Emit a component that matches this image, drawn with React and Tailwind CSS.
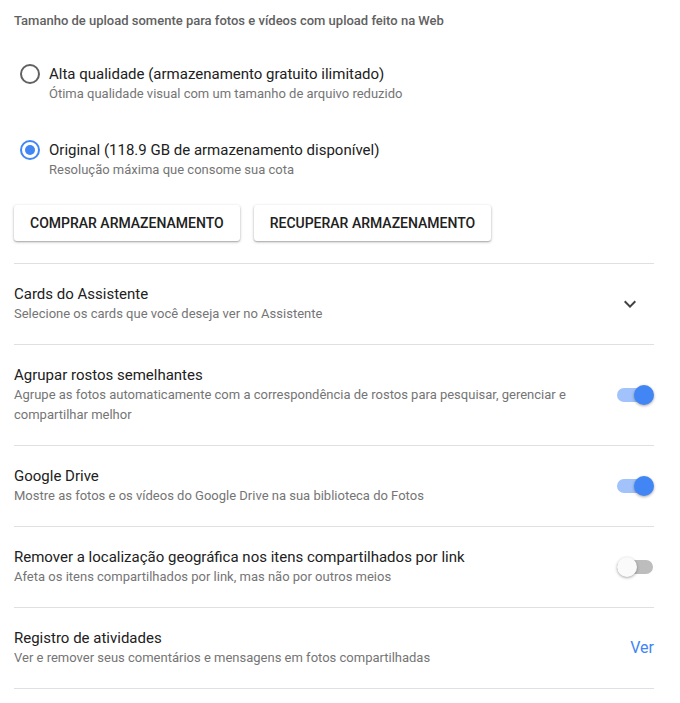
import React from "react";

function Radio({ checked }) {
  return (
    <div
      className={
        "w-5 h-5 rounded-full border-2 flex items-center justify-center shrink-0 " +
        (checked ? "border-[#4285f4]" : "border-[#616161]")
      }
    >
      {checked && <div className="w-[10px] h-[10px] rounded-full bg-[#4285f4]" />}
    </div>
  );
}

function Toggle({ on }) {
  return (
    <div className="relative w-[37px] h-5 flex items-center shrink-0">
      <div
        className={
          "w-[36px] h-[14px] rounded-full " + (on ? "bg-[#a1c2fa]" : "bg-[#bdbdbd]")
        }
      />
      <div
        className={
          "absolute top-0 w-5 h-5 rounded-full shadow-[0_1px_3px_rgba(0,0,0,0.35)] " +
          (on ? "right-0 bg-[#4285f4]" : "left-0 bg-[#fafafa]")
        }
      />
    </div>
  );
}

function Row({ title, sub, right }) {
  return (
    <div className="flex items-center border-b border-[#e0e0e0] py-5">
      <div className="flex-1 pr-[40px]">
        <div className="text-[15px] leading-5 text-[#212121]">{title}</div>
        <div className="text-[13px] leading-5 text-[#757575]">{sub}</div>
      </div>
      {right}
    </div>
  );
}

export default function App() {
  return (
    <div
      className="w-[680px] bg-white px-[14px] pr-[26px]"
      style={{ fontFamily: "Roboto, 'Liberation Sans', sans-serif" }}
    >
      <div className="pt-[11px] text-[13px] leading-5 font-medium text-[#616161]">
        Tamanho de upload somente para fotos e vídeos com upload feito na Web
      </div>

      <div className="mt-[33px] flex items-start pl-[6px]">
        <Radio checked={false} />
        <div className="ml-[9px]">
          <div className="text-[15px] leading-5 text-[#212121]">
            Alta qualidade (armazenamento gratuito ilimitado)
          </div>
          <div className="text-[13px] leading-5 text-[#757575]">
            Ótima qualidade visual com um tamanho de arquivo reduzido
          </div>
        </div>
      </div>

      <div className="mt-[36px] flex items-start pl-[6px]">
        <Radio checked={true} />
        <div className="ml-[9px]">
          <div className="text-[15px] leading-5 text-[#212121]">
            Original (118.9 GB de armazenamento disponível)
          </div>
          <div className="text-[13px] leading-5 text-[#757575]">
            Resolução máxima que consome sua cota
          </div>
        </div>
      </div>

      <div className="mt-[25px] flex gap-[14px]">
        <button className="h-9 px-[16px] rounded-[3px] bg-white text-[14px] font-medium text-[#212121] shadow-[0_1px_3px_rgba(0,0,0,0.3),0_1px_1px_rgba(0,0,0,0.12)]">
          COMPRAR ARMAZENAMENTO
        </button>
        <button className="h-9 px-[16px] rounded-[3px] bg-white text-[14px] font-medium text-[#212121] shadow-[0_1px_3px_rgba(0,0,0,0.3),0_1px_1px_rgba(0,0,0,0.12)]">
          RECUPERAR ARMAZENAMENTO
        </button>
      </div>

      <div className="mt-[22px] border-t border-[#e0e0e0]">
        <Row
          title="Cards do Assistente"
          sub="Selecione os cards que você deseja ver no Assistente"
          right={
            <div className="w-[37px] flex justify-start pl-[7px]">
              <svg width="12" height="8" viewBox="0 0 12 8">
                <path d="M1.4 0.6 L6 5.2 L10.6 0.6 L12 2 L6 8 L0 2 Z" fill="#424242" />
              </svg>
            </div>
          }
        />
        <Row
          title="Agrupar rostos semelhantes"
          sub="Agrupe as fotos automaticamente com a correspondência de rostos para pesquisar, gerenciar e compartilhar melhor"
          right={<Toggle on={true} />}
        />
        <Row
          title="Google Drive"
          sub="Mostre as fotos e os vídeos do Google Drive na sua biblioteca do Fotos"
          right={<Toggle on={true} />}
        />
        <Row
          title="Remover a localização geográfica nos itens compartilhados por link"
          sub="Afeta os itens compartilhados por link, mas não por outros meios"
          right={<Toggle on={false} />}
        />
        <Row
          title="Registro de atividades"
          sub="Ver e remover seus comentários e mensagens em fotos compartilhadas"
          right={<div className="text-[16px] leading-5 text-[#4285f4]">Ver</div>}
        />
      </div>
      <div className="h-[14px]" />
    </div>
  );
}
